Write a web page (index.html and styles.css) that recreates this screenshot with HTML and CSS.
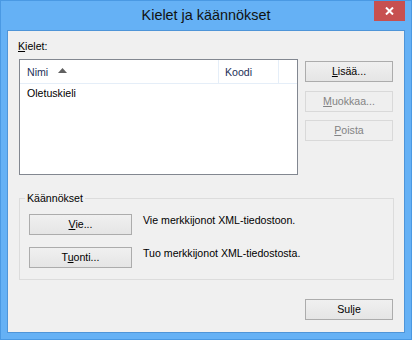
FILE: index.html
```html
<!DOCTYPE html>
<html lang="fi">
<head>
<meta charset="utf-8">
<title>Kielet ja käännökset</title>
<link rel="stylesheet" href="styles.css">
</head>
<body>
<div class="window">
  <div class="titlebar">
    <span class="title">Kielet ja käännökset</span>
    <button class="close" aria-label="Sulje">
      <svg width="9" height="8" viewBox="0 0 9 8"><path d="M1 0.5 L8 7.5 M8 0.5 L1 7.5" stroke="#fff" stroke-width="2" fill="none"/></svg>
    </button>
  </div>
  <div class="client">
    <div class="label"><u>K</u>ielet:</div>
    <div class="top">
      <div class="list">
        <div class="lhead">
          <div class="col c1"><span>Nimi</span><svg class="sort" width="9" height="5" viewBox="0 0 9 5"><path d="M0 5 L4.5 0 L9 5 Z" fill="#606060"/></svg></div>
          <div class="col c2">Koodi</div>
          <div class="col c3"></div>
        </div>
        <div class="lrow">Oletuskieli</div>
      </div>
      <div class="side">
        <button class="btn"><u>L</u>isää...</button>
        <button class="btn b2" disabled><u>M</u>uokkaa...</button>
        <button class="btn b3" disabled><u>P</u>oista</button>
      </div>
    </div>
    <fieldset class="group">
      <legend>Käännökset</legend>
      <div class="grow">
        <button class="btn wide"><u>V</u>ie...</button>
        <span class="desc">Vie merkkijonot XML-tiedostoon.</span>
      </div>
      <div class="grow g2">
        <button class="btn wide">T<u>u</u>onti...</button>
        <span class="desc">Tuo merkkijonot XML-tiedostosta.</span>
      </div>
    </fieldset>
    <div class="footer">
      <button class="btn">Sulje</button>
    </div>
  </div>
</div>
</body>
</html>
```
FILE: styles.css
```css
* { box-sizing: border-box; }
html, body { margin: 0; padding: 0; }
body {
  font-family: "Liberation Sans", Arial, sans-serif;
  font-size: 10.6px;
  color: #000;
}
.window {
  width: 412px;
  height: 340px;
  border: 1px solid #4a99e3;
  background: #65b1f5;
  display: flex;
  flex-direction: column;
}
.titlebar {
  height: 29px;
  display: grid;
  grid-template-columns: 1fr auto 1fr;
  align-items: start;
}
.title {
  grid-column: 2;
  font-size: 14.4px;
  line-height: 29px;
  color: #111;
  white-space: nowrap;
}
.close {
  grid-column: 3;
  justify-self: end;
  margin-right: 6px;
  width: 31px;
  height: 20px;
  border: 0;
  padding: 0;
  background: #c75050;
  display: flex;
  align-items: center;
  justify-content: center;
}
.client {
  flex: 1;
  margin: 0 6px 6px 6px;
  border: 1px solid #4f95d8;
  background: #f0f0f0;
  padding: 0 10px 0 11px;
}
.label {
  margin-top: 8px;
  margin-left: -1px;
  line-height: 15px;
}
.top {
  margin-top: 5px;
  display: grid;
  grid-template-columns: 279px 88px;
  column-gap: 7px;
  align-items: start;
}
.list {
  height: 116px;
  border: 1px solid #828790;
  background: #fff;
}
.lhead {
  display: flex;
  height: 24px;
  border-bottom: 1px solid #e5eef8;
}
.col {
  display: flex;
  align-items: center;
  padding-left: 7px;
  color: #1e2f58;
}
.c1 { width: 199px; border-right: 1px solid #e5eef8; }
.c2 { width: 60px; border-right: 1px solid #e5eef8; padding-left: 6px; }
.c3 { flex: 1; }
.sort { margin-left: 10px; margin-top: -2px; }
.lrow {
  height: 19px;
  line-height: 19px;
  padding-left: 7px;
}
.side {
  display: flex;
  flex-direction: column;
  padding-top: 2px;
}
.btn {
  font: inherit;
  color: #000;
  width: 88px;
  height: 21px;
  padding: 0;
  border: 1px solid #acacac;
  background: linear-gradient(#f0f0f0, #e5e5e5);
  line-height: 19px;
  text-align: center;
}
.btn:disabled {
  color: #838383;
  border-color: #d9d9d9;
  background: #efefef;
}
.b2 { margin-top: 9px; }
.b3 { margin-top: 8px; }
.group {
  margin: 16px 0 0 0;
  padding: 9px 0 11px 9px;
  border: 1px solid #dcdcdc;
  min-width: 0;
}
.group legend {
  padding: 0 2px;
  margin-left: -4px;
  line-height: 14px;
}
.grow {
  display: flex;
  align-items: flex-start;
}
.g2 { margin-top: 12px; }
.wide { width: 103px; }
.desc {
  margin-left: 11px;
  line-height: 15px;
  margin-top: -1px;
}
.footer {
  display: flex;
  justify-content: flex-end;
  margin-top: 19px;
  padding-right: 1px;
}
```
